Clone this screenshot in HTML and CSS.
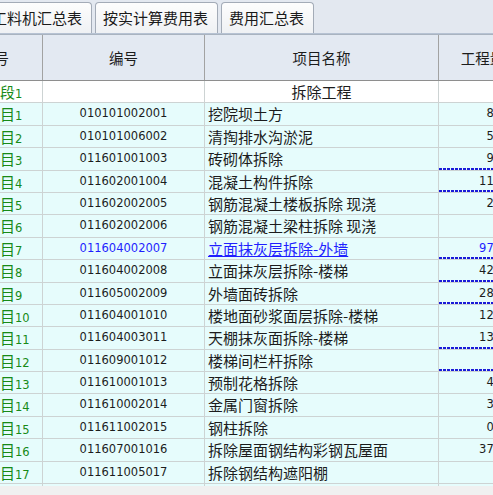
FILE: index.html
```html
<!DOCTYPE html>
<html lang="zh">
<head>
<meta charset="utf-8">
<link rel="stylesheet" href="styles.css">
</head>
<body>
<div class="app">
  <div class="tabbar">
    <div class="tablist">
      <div class="tab">工料机汇总表</div>
      <div class="tab">按实计算费用表</div>
      <div class="tab">费用汇总表</div>
    </div>
  </div>
  <div class="grid">
    <div class="row head">
      <div class="c c1 hc">序号</div>
      <div class="c c2 hc">编号</div>
      <div class="c c3 hc">项目名称</div>
      <div class="c c4 hc">工程量</div>
    </div>
    <div class="row white">
      <div class="c c1 g">标段<span class="n">1</span></div>
      <div class="c c2"></div>
      <div class="c c3 mid">拆除工程</div>
      <div class="c c4"></div>
    </div>
    <div class="row"><div class="c c1 g">项目<span class="n">1</span></div><div class="c c2 code">010101002001</div><div class="c c3">挖院坝土方</div><div class="c c4 num">8.26</div></div>
    <div class="row"><div class="c c1 g">项目<span class="n">2</span></div><div class="c c2 code">010101006002</div><div class="c c3">清掏排水沟淤泥</div><div class="c c4 num">5.63</div></div>
    <div class="row"><div class="c c1 g">项目<span class="n">3</span></div><div class="c c2 code">011601001003</div><div class="c c3">砖砌体拆除</div><div class="c c4 num dash">9.45</div></div>
    <div class="row"><div class="c c1 g">项目<span class="n">4</span></div><div class="c c2 code">011602001004</div><div class="c c3">混凝土构件拆除</div><div class="c c4 num dash">11.28</div></div>
    <div class="row"><div class="c c1 g">项目<span class="n">5</span></div><div class="c c2 code">011602002005</div><div class="c c3">钢筋混凝土楼板拆除 现浇</div><div class="c c4 num">2.16</div></div>
    <div class="row"><div class="c c1 g">项目<span class="n">6</span></div><div class="c c2 code">011602002006</div><div class="c c3">钢筋混凝土梁柱拆除 现浇</div><div class="c c4 num"></div></div>
    <div class="row blue"><div class="c c1 g">项目<span class="n">7</span></div><div class="c c2 code">011604002007</div><div class="c c3 ul">立面抹灰层拆除-外墙</div><div class="c c4 num dash">97.35</div></div>
    <div class="row"><div class="c c1 g">项目<span class="n">8</span></div><div class="c c2 code">011604002008</div><div class="c c3">立面抹灰层拆除-楼梯</div><div class="c c4 num dash">42.18</div></div>
    <div class="row"><div class="c c1 g">项目<span class="n">9</span></div><div class="c c2 code">011605002009</div><div class="c c3">外墙面砖拆除</div><div class="c c4 num dash">28.64</div></div>
    <div class="row"><div class="c c1 g">项目<span class="n">10</span></div><div class="c c2 code">011604001010</div><div class="c c3">楼地面砂浆面层拆除-楼梯</div><div class="c c4 num">12.40</div></div>
    <div class="row"><div class="c c1 g">项目<span class="n">11</span></div><div class="c c2 code">011604003011</div><div class="c c3">天棚抹灰面拆除-楼梯</div><div class="c c4 num dash">13.52</div></div>
    <div class="row"><div class="c c1 g">项目<span class="n">12</span></div><div class="c c2 code">011609001012</div><div class="c c3">楼梯间栏杆拆除</div><div class="c c4 num dash"></div></div>
    <div class="row"><div class="c c1 g">项目<span class="n">13</span></div><div class="c c2 code">011610001013</div><div class="c c3">预制花格拆除</div><div class="c c4 num">4.20</div></div>
    <div class="row"><div class="c c1 g">项目<span class="n">14</span></div><div class="c c2 code">011610002014</div><div class="c c3">金属门窗拆除</div><div class="c c4 num">3.78</div></div>
    <div class="row"><div class="c c1 g">项目<span class="n">15</span></div><div class="c c2 code">011611002015</div><div class="c c3">钢柱拆除</div><div class="c c4 num">0.56</div></div>
    <div class="row"><div class="c c1 g">项目<span class="n">16</span></div><div class="c c2 code">011607001016</div><div class="c c3">拆除屋面钢结构彩钢瓦屋面</div><div class="c c4 num">37.80</div></div>
    <div class="row"><div class="c c1 g">项目<span class="n">17</span></div><div class="c c2 code">011611005017</div><div class="c c3">拆除钢结构遮阳棚</div><div class="c c4 num"></div></div>
    <div class="row"><div class="c c1 g"></div><div class="c c2"></div><div class="c c3"></div><div class="c c4"></div></div>
  </div>
</div>
</body>
</html>
```
FILE: styles.css
```css
html, body {
  margin: 0;
  padding: 0;
}
body {
  width: 493px;
  height: 495px;
  overflow: hidden;
  background: #f0f0f0;
  font-family: "Noto Sans CJK SC", sans-serif;
  font-size: 15px;
  color: #1c1c1c;
}
.app {
  height: 486px;
  overflow: hidden;
  background: #e6fcfc;
}
.tabbar {
  height: 34px;
  box-sizing: border-box;
  background: #e3e8f0;
  border-bottom: 1px solid #b6c2d3;
  overflow: hidden;
}
.tablist {
  display: flex;
  gap: 3px;
  margin-left: -16px;
  padding-top: 2px;
}
.tab {
  height: 31px;
  box-sizing: border-box;
  border: 1px solid #a3abb7;
  border-bottom: none;
  border-radius: 4px 4px 0 0;
  background: linear-gradient(#fdfdfd, #eff1f4);
  padding: 0 9px 0 7px;
  line-height: 29px;
  white-space: nowrap;
  color: #1a1a1a;
}
.grid {
  margin-left: -53px;
  width: 580px;
}
.row {
  display: grid;
  grid-template-columns: 96px 162px 234px 88px;
  height: 22.4px;
  box-sizing: border-box;
  border-bottom: 1px solid #cdd3d3;
  background: #e6fcfc;
}
.row.white {
  background: #ffffff;
}
.row.head {
  height: 47px;
  background: #e3e9f2;
  border-top: 1px solid #a9b3c0;
  border-bottom: 1px solid #8e8e8e;
}
.c {
  border-right: 1px solid #cdd3d3;
  white-space: nowrap;
  overflow: hidden;
  line-height: 21px;
  box-sizing: border-box;
}
.head .c {
  border-right-color: #a2a2a2;
  line-height: 45px;
  text-align: center;
  padding-left: 0;
}
.hc {
  font-size: 14.5px;
}
.c1 {
  padding-left: 38px;
}
.c3 {
  padding-left: 3px;
}
.mid {
  text-align: center;
  padding-left: 0;
}
.g {
  color: #178a17;
}
.n, .code, .num {
  font-family: "DejaVu Sans", sans-serif;
  font-size: 11.5px;
}
.code {
  text-align: center;
}
.num {
  text-align: right;
  padding-right: 14px;
}
.dash {
  background: repeating-linear-gradient(90deg, #1b1bd8 0 3px, transparent 3px 4px) left bottom / 100% 2px no-repeat;
}
.blue .code, .blue .c3, .blue .num {
  color: #1f1fff;
}
.ul {
  text-decoration: underline;
  text-underline-offset: 1px;
}
```
